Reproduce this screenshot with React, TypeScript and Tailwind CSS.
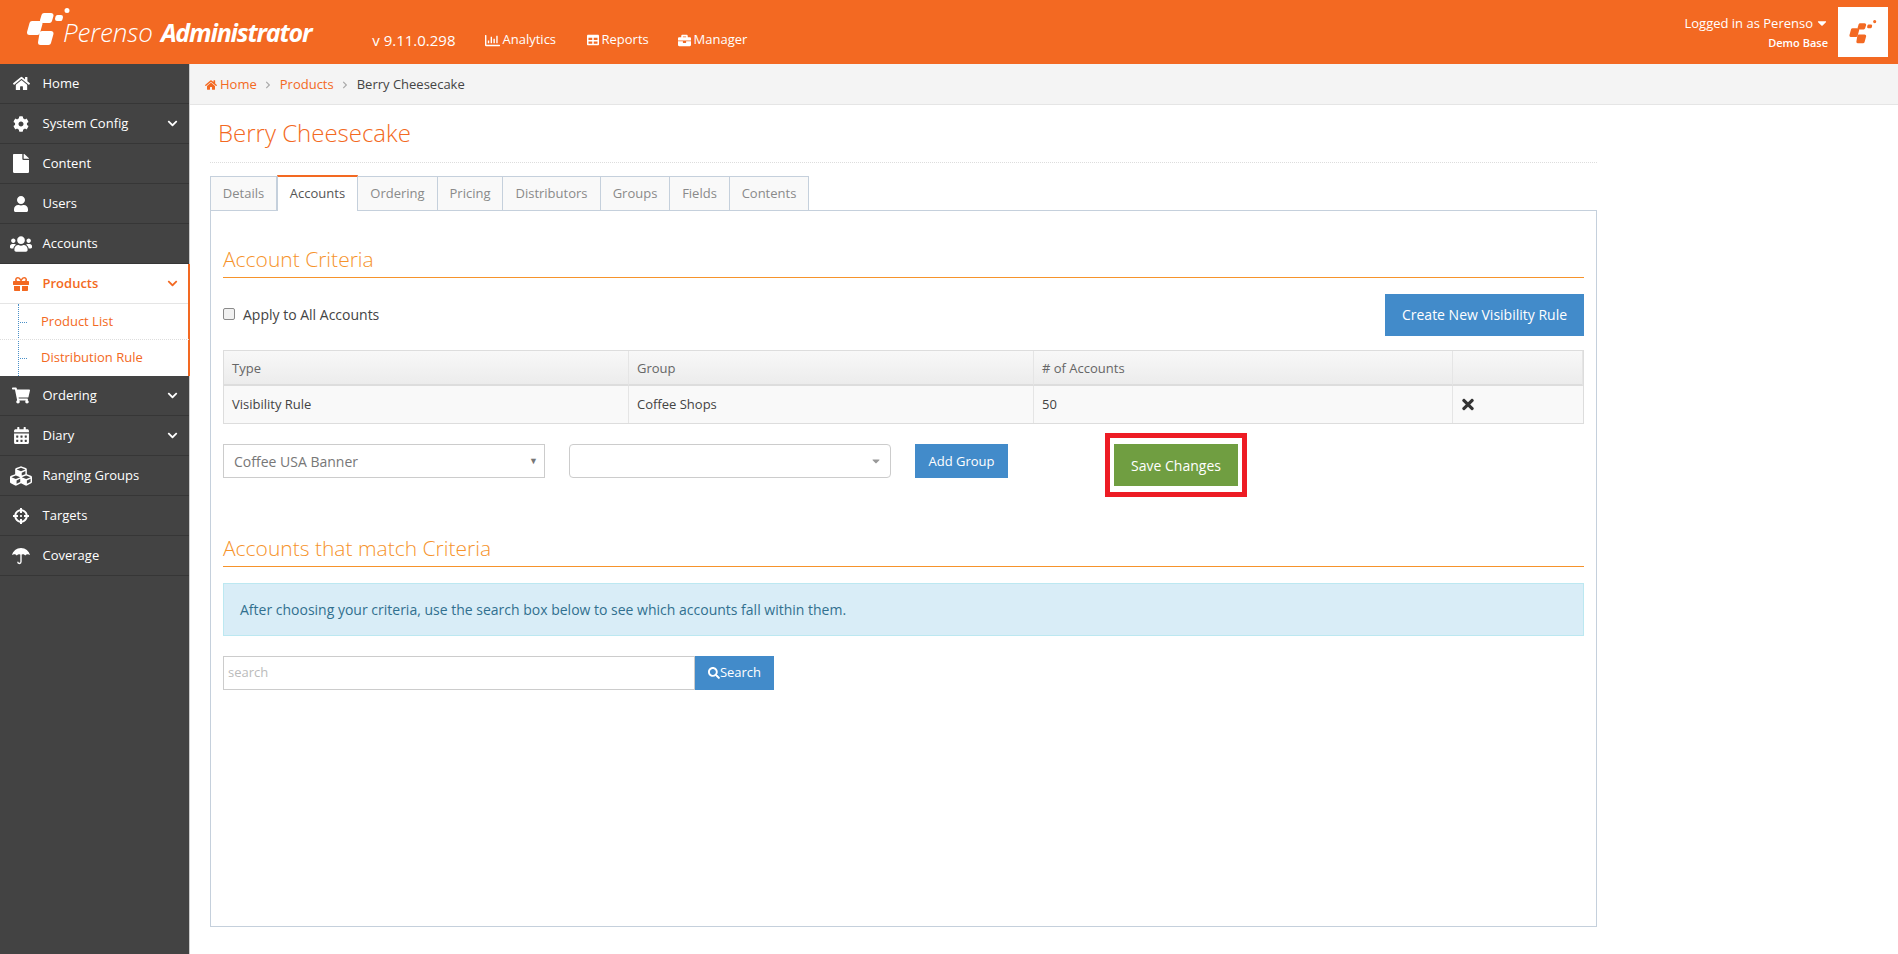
import type { ReactNode } from "react";
import {
  FaBriefcase,
  FaCalendarAlt,
  FaCaretDown,
  FaChevronDown,
  FaChevronRight,
  FaCog,
  FaCrosshairs,
  FaCubes,
  FaFile,
  FaGift,
  FaHome,
  FaRegChartBar,
  FaSearch,
  FaShoppingCart,
  FaTable,
  FaTimes,
  FaUser,
  FaUsers,
} from "react-icons/fa";

const font = { fontFamily: '"Open Sans", sans-serif' };

type NavItem = { label: string; icon: ReactNode; chevron?: boolean };

function UmbrellaIcon() {
  return (
    <svg viewBox="0 0 20 20" className="h-[20px] w-[18px]" fill="currentColor">
      <path d="M10 1C5 1 1 4.500 0 9c1.800-1.500 3.800-1.500 5.300.5C6.800 7.500 8.800 7.500 10 9c1.200-1.500 3.200-1.500 4.700.5 1.500-2 3.500-2 5.300-.5C19 4.500 15 1 10 1z" />
      <path d="M10 8v8.500a1.800 1.800 0 0 1-3.600 0" fill="none" stroke="currentColor" strokeWidth="1.500" />
    </svg>
  );
}

const topNav: NavItem[] = [
  { label: "Home", icon: <FaHome className="h-[17px] w-[17px]" /> },
  { label: "System Config", icon: <FaCog className="h-4 w-4" />, chevron: true },
  { label: "Content", icon: <FaFile preserveAspectRatio="none" className="h-[19px] w-[16px]" /> },
  { label: "Users", icon: <FaUser className="h-4 w-4" /> },
  { label: "Accounts", icon: <FaUsers className="h-[22px] w-[22px]" /> },
];

const bottomNav: NavItem[] = [
  { label: "Ordering", icon: <FaShoppingCart className="h-[17px] w-[18px]" />, chevron: true },
  { label: "Diary", icon: <FaCalendarAlt className="h-[17px] w-[17px]" />, chevron: true },
  { label: "Ranging Groups", icon: <FaCubes className="h-[22px] w-[22px]" /> },
  { label: "Targets", icon: <FaCrosshairs className="h-4 w-4" /> },
  { label: "Coverage", icon: <UmbrellaIcon /> },
];

const tabs = [
  { label: "Details", w: "w-[67px]" },
  { label: "Accounts", w: "w-[81px]" },
  { label: "Ordering", w: "w-[80px]" },
  { label: "Pricing", w: "w-[65px]" },
  { label: "Distributors", w: "w-[98px]" },
  { label: "Groups", w: "w-[69px]" },
  { label: "Fields", w: "w-[60px]" },
  { label: "Contents", w: "w-[79px]" },
];

function Mark({ className }: { className: string }) {
  return (
    <svg viewBox="0 0 43 38" className={className} fill="currentColor" stroke="currentColor" strokeWidth="5" strokeLinejoin="round">
      <polygon points="17,7.500 24,7.500 22.500,12.500 15.500,12.500" />
      <polygon points="5,15.500 13,15.500 10.500,24.500 2.500,24.500" />
      <polygon points="15,25.500 24,25.500 21.500,34.500 13.500,34.500" />
      <polygon points="30.500,9 34,9 33.500,11 30,11" strokeWidth="4" />
      <circle cx="40" cy="2.500" r="1" strokeWidth="3" />
    </svg>
  );
}

function SideRow({ item }: { item: NavItem }) {
  return (
    <div className="flex h-10 items-center border-b border-[#363636] text-[13px] text-white">
      <span className="flex w-[42.5px] shrink-0 justify-center">{item.icon}</span>
      <span>{item.label}</span>
      {item.chevron && <FaChevronDown className="ml-auto mr-[11px] h-[11px] w-[11px]" />}
    </div>
  );
}

function SubRow({ label, last }: { label: string; last?: boolean }) {
  return (
    <div className={`relative flex h-9 items-center pl-[41px] text-[13px] text-[#f36922] ${last ? "" : "border-b border-dotted border-[#dddddd]"}`}>
      <span className="absolute left-[20px] top-1/2 w-[7px] border-t border-dotted border-[#4a90c8]" />
      {label}
    </div>
  );
}

function SectionTitle({ children }: { children: ReactNode }) {
  return (
    <h3 className="border-b border-[#f6932b] pb-[5px] text-[21px] font-light leading-[26px] text-[#f6932b]">
      {children}
    </h3>
  );
}

function Sidebar() {
  return (
    <aside className="w-[190px] shrink-0 border-r border-[#cccccc] bg-[#434343]">
      {topNav.map((item) => (
        <SideRow key={item.label} item={item} />
      ))}
      <div className="relative bg-white">
        <div className="absolute right-[-1px] top-0 h-full w-[2px] bg-[#f36922]" />
        <div className="flex h-10 items-center border-b border-[#e5e5e5] text-[13px] font-semibold text-[#f36922]">
          <span className="flex w-[42.5px] justify-center">
            <FaGift className="h-4 w-4" />
          </span>
          <span>Products</span>
          <FaChevronDown className="ml-auto mr-[11px] h-[11px] w-[11px]" />
        </div>
        <div className="relative">
          <div className="absolute bottom-0 left-[18px] top-0 border-l border-dotted border-[#4a90c8]" />
          <SubRow label="Product List" />
          <SubRow label="Distribution Rule" last />
        </div>
      </div>
      {bottomNav.map((item) => (
        <SideRow key={item.label} item={item} />
      ))}
    </aside>
  );
}

export default function App() {
  return (
    <div className="flex min-h-[954px] flex-col bg-white text-[13px] text-[#555555]" style={font}>
      <header className="flex h-16 items-center bg-[#f36922] text-white">
        <div className="ml-[27px] flex items-center">
          <Mark className="h-[38px] w-[43px] -translate-y-[5px] text-white" />
          <span className="-ml-[7px] text-[26px] font-light italic leading-none tracking-[-0.1px]">Perenso</span>
          <span className="ml-[8px] text-[25px] font-bold italic leading-none tracking-[-1.2px]">Administrator</span>
        </div>
        <span className="ml-[61px] mt-[16px] text-[15px]">v 9.11.0.298</span>
        <nav className="ml-[29px] mt-[16px] flex items-center text-[13px]">
          <span className="flex w-[102px] items-center gap-[3px]">
            <FaRegChartBar className="h-[15px] w-[15px]" /> Analytics
          </span>
          <span className="flex w-[91px] items-center gap-[3px]">
            <FaTable className="h-3 w-3" /> Reports
          </span>
          <span className="flex items-center gap-[3px]">
            <FaBriefcase className="h-[13px] w-[13px]" /> Manager
          </span>
        </nav>
        <div className="ml-auto mr-[10px] flex items-center gap-[10px]">
          <div className="text-right">
            <div className="flex items-center justify-end gap-[3px] text-[13px] leading-[22px]">
              Logged in as Perenso <FaCaretDown className="h-[14px] w-[12px]" />
            </div>
            <div className="text-[11px] font-semibold leading-[18px]">Demo Base</div>
          </div>
          <div className="flex h-[50px] w-[50px] items-center justify-center bg-white">
            <Mark className="h-[24px] w-[28px] text-[#f36922]" />
          </div>
        </div>
      </header>
      <div className="flex flex-1">
        <Sidebar />
        <main className="min-w-0 flex-1">
          <div className="flex h-[41px] items-center gap-[7.5px] border-b border-[#e5e5e5] bg-[#f4f4f4] pl-[15px] pt-px text-[13px]">
            <span className="flex items-center gap-[3px] text-[#f36922]">
              <FaHome className="h-3 w-3" /> Home
            </span>
            <FaChevronRight className="h-2 w-2 text-[#aaaaaa]" />
            <span className="text-[#f36922]">Products</span>
            <FaChevronRight className="h-2 w-2 text-[#aaaaaa]" />
            <span className="text-[#444444]">Berry Cheesecake</span>
          </div>
          <div className="w-[1407px] pl-[20px]">
            <div className="border-b border-dotted border-[#dddddd] pb-[12px] pl-[8px] pt-[11px]">
              <h1 className="text-[24px] font-light leading-[34px] text-[#f36922]">Berry Cheesecake</h1>
            </div>
            <div className="mt-[13px] flex h-[35px]">
              {tabs.map((tab) =>
                tab.label === "Accounts" ? (
                  <div
                    key={tab.label}
                    className={`${tab.w} relative z-10 -mt-px flex h-[36px] items-center justify-center border-x border-t-2 border-x-[#c5d0dc] border-t-[#f36922] bg-white text-[#555555]`}
                  >
                    {tab.label}
                  </div>
                ) : (
                  <div
                    key={tab.label}
                    className={`${tab.w} flex items-center justify-center border-y border-r border-[#c5d0dc] bg-[#f9f9f9] text-[#8a8a8a] first:border-l`}
                  >
                    {tab.label}
                  </div>
                ),
              )}
            </div>
            <section className="-mt-px h-[717px] border border-[#c5d0dc] px-[12px] pt-[35px]">
              <SectionTitle>Account Criteria</SectionTitle>
              <div className="mt-4 flex items-center justify-between">
                <label className="flex items-center gap-2 pb-[2px] text-[14px] text-[#444444]">
                  <span className="h-3 w-3 rounded-[2px] border border-[#8a8a8a] bg-[#f1f1f1]" />
                  Apply to All Accounts
                </label>
                <button className="h-[42px] w-[199px] bg-[#428bca] pb-[2px] text-[14px] text-white">
                  Create New Visibility Rule
                </button>
              </div>
              <div className="mt-[14px] grid grid-cols-[405px_405px_419px_1fr] border border-[#dddddd]">
                {["Type", "Group", "# of Accounts", ""].map((head) => (
                  <div
                    key={head}
                    className="flex h-[35px] items-center border-b-2 border-r border-b-[#dddddd] border-r-[#e5e5e5] bg-gradient-to-b from-[#f8f8f8] to-[#ececec] pl-2 pt-[2px] text-[#666666] last:border-r-0"
                  >
                    {head}
                  </div>
                ))}
                {["Visibility Rule", "Coffee Shops", "50"].map((cell) => (
                  <div key={cell} className="flex h-[37px] items-center border-r border-[#e5e5e5] bg-[#f9f9f9] pl-2 text-[#444444]">
                    {cell}
                  </div>
                ))}
                <div className="flex h-[37px] items-center bg-[#f9f9f9] pl-[8px] text-[#333333]">
                  <FaTimes className="h-[17px] w-[14px]" />
                </div>
              </div>
              <div className="mt-[20px] flex items-start">
                <div className="flex h-[34px] w-[322px] items-center justify-between border border-[#cccccc] pl-[10px] pr-[6px] text-[14px] text-[#777777]">
                  Coffee USA Banner
                  <span className="text-[9px] text-[#777777]">▼</span>
                </div>
                <div className="ml-[24px] flex h-[34px] w-[322px] items-center justify-end rounded border border-[#cccccc] pr-[9px]">
                  <FaCaretDown className="h-[12px] w-[10px] text-[#999999]" />
                </div>
                <button className="ml-[24px] h-[34px] w-[93px] bg-[#428bca] pt-[2px] text-white">Add Group</button>
                <div className="relative ml-[106px] h-[42px] w-[124px]">
                  <button className="h-full w-full bg-[#709e41] text-[14px] text-white">Save Changes</button>
                  <div className="absolute -inset-x-[9px] -inset-y-[11px] border-[5px] border-[#ed1c24]" />
                </div>
              </div>
              <div className="mt-[49px]">
                <SectionTitle>Accounts that match Criteria</SectionTitle>
              </div>
              <div className="mt-4 flex h-[53px] items-center border border-[#bce8f1] bg-[#d9edf7] pl-4 text-[14px] text-[#31708f]">
                After choosing your criteria, use the search box below to see which accounts fall within them.
              </div>
              <div className="mt-5 flex h-[34px]">
                <div className="flex w-[472px] items-center border border-[#cccccc] pl-1 text-[#bbbbbb]">search</div>
                <button className="flex w-[79px] items-center justify-center bg-[#428bca] text-white">
                  <FaSearch className="h-[12px] w-[12px]" />
                  Search
                </button>
              </div>
            </section>
          </div>
        </main>
      </div>
    </div>
  );
}
